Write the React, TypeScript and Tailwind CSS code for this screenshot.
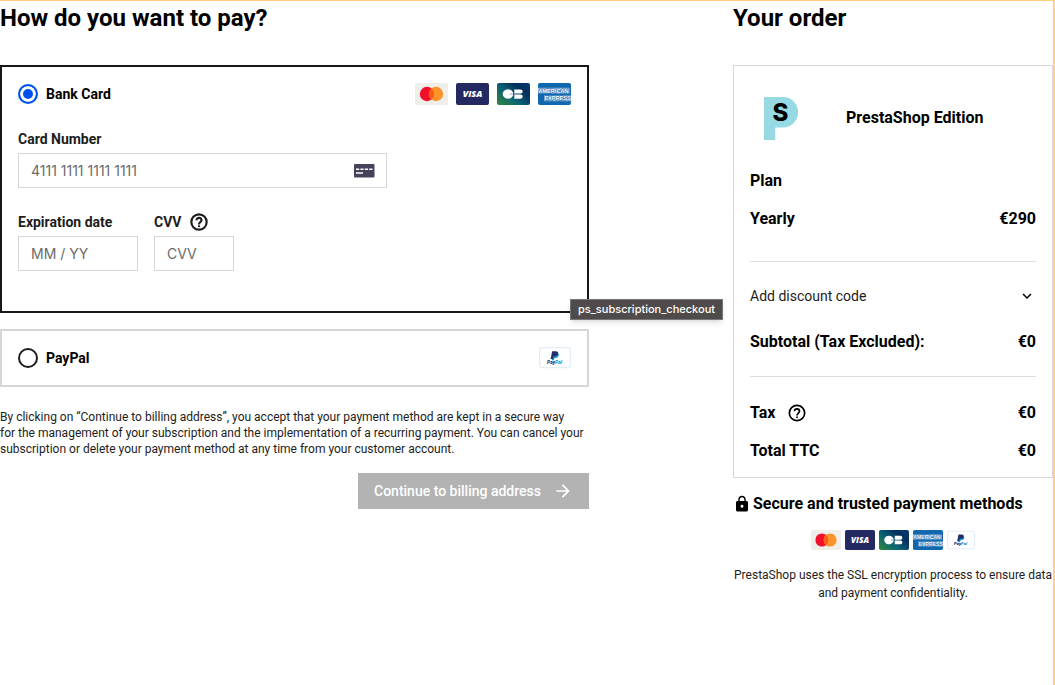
import { useState, type ReactNode } from "react";
import { MdArrowForward, MdKeyboardArrowDown, MdLock } from "react-icons/md";

type Brand = { className: string };

function Mastercard({ className }: Brand) {
  return (
    <svg viewBox="0 0 33 22" className={className} role="img" aria-label="Mastercard">
      <rect width="33" height="22" rx="2" fill="#efeee9" />
      <circle cx="12" cy="11" r="7.2" fill="#f20f2b" />
      <circle cx="21" cy="11" r="7.2" fill="#fb952b" />
      <path d="M16.5 5.4a7.2 7.2 0 0 1 0 11.2a7.2 7.2 0 0 1 0-11.2Z" fill="#f95c14" />
    </svg>
  );
}

function Visa({ className }: Brand) {
  return (
    <svg viewBox="0 0 33 22" className={className} role="img" aria-label="Visa">
      <rect width="33" height="22" rx="2" fill="#242a61" />
      <text x="16.5" y="14.4" textAnchor="middle" fontFamily="Open Sans, sans-serif" fontSize="9" fontWeight="800" fontStyle="italic" fill="#fff">
        VISA
      </text>
    </svg>
  );
}

function CarteBancaire({ className }: Brand) {
  return (
    <svg viewBox="0 0 33 22" className={className} role="img" aria-label="Carte Bancaire">
      <defs>
        <linearGradient id="cb" x1="0" y1="1" x2="1" y2="0.2">
          <stop offset="0" stopColor="#328a3c" />
          <stop offset="0.45" stopColor="#0b6275" />
          <stop offset="0.8" stopColor="#052f5c" />
          <stop offset="1" stopColor="#03386c" />
        </linearGradient>
      </defs>
      <rect width="33" height="22" rx="2" fill="url(#cb)" />
      <path d="M16.3 10.7A5.3 4.7 0 1 0 16.3 11.3H13V10.7Z" fill="#fff" />
      <path d="M17.3 6.4h6.3a2.1 2.1 0 0 1 0 4.2h-6.3ZM17.3 11.5h6.3a2.1 2.1 0 0 1 0 4.2h-6.3Z" fill="#fff" />
    </svg>
  );
}

function Amex({ className }: Brand) {
  return (
    <svg viewBox="0 0 33 22" className={className} role="img" aria-label="American Express">
      <rect width="33" height="22" rx="2" fill="#0f67ad" />
      <rect x="0" y="4.8" width="31.5" height="5.8" fill="#fff" opacity="0.6" />
      <rect x="6" y="12.4" width="27" height="5.8" fill="#fff" opacity="0.6" />
      <g fontFamily="Liberation Sans, sans-serif" fontWeight="700" fontSize="5.6" fill="#fff" stroke="#0f67ad" strokeWidth="0.9" paintOrder="stroke">
        <text x="0.4" y="9.7">AMERICAN</text>
        <text x="6.4" y="17.3">EXPRESS</text>
      </g>
    </svg>
  );
}

function PayPal({ className }: Brand) {
  return (
    <svg viewBox="0 0 30 20" className={className} role="img" aria-label="PayPal">
      <rect x="0.6" y="0.6" width="28.8" height="18.8" rx="2" fill="#fff" stroke="#e3edf5" strokeWidth="1.2" />
      <path d="M13.6 5.6h3.6c1.3.4 1.6 1.4 1.2 2.6-.4 1.5-1.5 2.1-3 2.1h-.9l-.5 2.2h-2.1Z" fill="#1b9ad9" />
      <path d="M12.3 4h3.4c1.9 0 2.6 1.1 2.2 2.5-.4 1.6-1.6 2.3-3.3 2.3h-1l-.5 2.5h-2.2Z" fill="#1f2f70" />
      <text x="14.6" y="15.6" textAnchor="middle" fontFamily="Roboto, sans-serif" fontSize="4.6" fontWeight="900" fontStyle="italic" fill="#1f2f70">
        Pay<tspan fill="#1b9ad9">Pal</tspan>
      </text>
    </svg>
  );
}

function PrestaShopLogo() {
  return (
    <svg viewBox="0 0 34 43" className="w-[34px] shrink-0" role="img" aria-label="PrestaShop">
      <path d="M0 0H19a15 15 0 0 1 0 30.5H11.3V43H0Z" fill="#97dae4" />
      <text x="16.5" y="24" textAnchor="middle" fontFamily="Inter, sans-serif" fontSize="24" fontWeight="800" fill="#000">
        S
      </text>
    </svg>
  );
}

function CardGlyph() {
  return (
    <svg viewBox="0 0 21 14" className="w-[21px]" aria-hidden="true">
      <rect width="20.5" height="13.5" rx="1" fill="#45435b" />
      <path d="M2 5.2h3.2M6.4 5.2h3.2M10.8 5.2h3.2M15.2 5.2h3.3M2 9h7" stroke="#fff" strokeWidth="1.5" />
    </svg>
  );
}

function HelpIcon({ weight }: { weight: number }) {
  return (
    <svg viewBox="0 0 24 24" className="size-5" fill="none" stroke="currentColor" strokeWidth={weight} aria-hidden="true">
      <circle cx="12" cy="12" r="9.2" />
      <path d="M9 10a3 3 0 1 1 6 0c0 2-3 2.2-3 5" />
      <path d="M12 16.1v2" />
    </svg>
  );
}

function Method(props: {
  name: string;
  selected: boolean;
  onSelect: () => void;
  brands: ReactNode;
  children?: ReactNode;
}) {
  return (
    <div className={props.selected ? "relative border-2 border-[#18181b] p-4" : "relative border-2 border-[#d6d6d6] p-4"}>
      <div className="flex h-[22px] items-center justify-between">
        <label className="flex items-center gap-2 text-sm font-bold text-black">
          <input
            type="radio"
            name="method"
            checked={props.selected}
            onChange={props.onSelect}
            className="size-5 appearance-none rounded-full border-2 border-[#1d1d1b] bg-white checked:border-[#0050f0] checked:bg-[#0050f0] checked:shadow-[inset_0_0_0_3px_white]"
          />
          {props.name}
        </label>
        <div className="flex items-center gap-2">{props.brands}</div>
      </div>
      {props.children}
    </div>
  );
}

const inputClass =
  "h-[35px] w-full border border-[#d6d6d6] bg-white px-3 font-['Inter',sans-serif] text-sm text-[#1d1d1b] outline-none placeholder:text-[#6b6b6b]";

function Row({ label, value }: { label: ReactNode; value?: string }) {
  return (
    <div className="flex items-center justify-between text-base leading-6 font-bold">
      <span className="flex items-center gap-3">{label}</span>
      <span>{value}</span>
    </div>
  );
}

export default function App() {
  const [method, setMethod] = useState("card");

  return (
    <main className="flex min-h-screen gap-36 border-t border-r-2 border-t-[#ffcc80] border-r-[#ffcf8c] bg-white font-['Roboto',sans-serif] text-black">
      <section className="min-w-0 flex-1">
        <h1 className="mb-[30px] text-2xl leading-[34px] font-bold">How do you want to pay?</h1>
        <form onSubmit={(e) => e.preventDefault()}>
          <div className="flex flex-col gap-4">
            <Method
              name="Bank Card"
              selected={method === "card"}
              onSelect={() => setMethod("card")}
              brands={
                <>
                  <Mastercard className="w-[33px]" />
                  <Visa className="w-[33px]" />
                  <CarteBancaire className="w-[33px]" />
                  <Amex className="w-[33px]" />
                </>
              }
            >
              <div className="flex flex-col gap-6 pt-6 pb-6 text-sm leading-5 font-bold text-[#1d1d1b]">
                <div className="w-2/3">
                  <label htmlFor="number" className="mb-1 block">Card Number</label>
                  <div className="relative">
                    <input id="number" inputMode="numeric" placeholder="4111 1111 1111 1111" className={`${inputClass} font-normal`} />
                    <span className="absolute inset-y-0 right-3 flex items-center">
                      <CardGlyph />
                    </span>
                  </div>
                </div>
                <div className="flex gap-4">
                  <div className="w-[120px]">
                    <label htmlFor="expiry" className="mb-1 block">Expiration date</label>
                    <input id="expiry" placeholder="MM / YY" className={`${inputClass} font-normal`} />
                  </div>
                  <div className="w-20">
                    <div className="mb-1 flex h-5 items-center gap-2">
                      <label htmlFor="cvv">CVV</label>
                      <button type="button" aria-label="About the CVV">
                        <HelpIcon weight={2.6} />
                      </button>
                    </div>
                    <input id="cvv" placeholder="CVV" className={`${inputClass} font-normal`} />
                  </div>
                </div>
              </div>
              <div role="tooltip" className="absolute -right-[136px] -bottom-[9px] z-10 border border-[#777] bg-[#504b4b] px-[7px] font-['Inter',sans-serif] text-[11px] leading-[19px] font-medium text-white shadow-md">
                ps_subscription_checkout
              </div>
            </Method>
            <Method
              name="PayPal"
              selected={method === "paypal"}
              onSelect={() => setMethod("paypal")}
              brands={<PayPal className="w-8" />}
            />
          </div>
          <p className="mt-[22px] text-xs leading-4 text-[#1d1d1b]">
            By clicking on “Continue to billing address”, you accept that your payment method are kept in a secure way
            <br />
            for the management of your subscription and the implementation of a recurring payment. You can cancel your
            subscription or delete your payment method at any time from your customer account.
          </p>
          <div className="mt-4 flex justify-end">
            <button type="submit" disabled className="flex h-9 min-w-[231px] items-center justify-between gap-2 bg-[#b3b3b3] px-4 text-sm font-medium text-white">
              Continue to billing address
              <MdArrowForward size={20} />
            </button>
          </div>
        </form>
      </section>

      <aside className="w-80 shrink-0">
        <h2 className="mb-[30px] text-2xl leading-[34px] font-bold">Your order</h2>
        <div className="border border-[#d6d6d6] px-4 pt-4 pb-3.5">
          <div className="flex h-[72px] items-center gap-12 pl-3.5 text-base font-bold">
            <PrestaShopLogo />
            PrestaShop Edition
          </div>
          <div className="flex flex-col gap-3.5 pt-[15px] pb-[30px]">
            <Row label="Plan" />
            <Row label="Yearly" value="€290" />
          </div>
          <div className="flex flex-col gap-6 border-t border-[#dedede] pt-6 pb-[22px]">
            <button type="button" className="flex items-center justify-between text-sm leading-5 text-[#1d1d1b]">
              Add discount code
              <MdKeyboardArrowDown size={18} className="text-black" />
            </button>
            <Row label="Subtotal (Tax Excluded):" value="€0" />
          </div>
          <div className="flex flex-col gap-3.5 border-t border-[#dedede] pt-6">
            <Row
              label={
                <>
                  Tax
                  <button type="button" aria-label="About the tax">
                    <HelpIcon weight={2} />
                  </button>
                </>
              }
              value="€0"
            />
            <Row label="Total TTC" value="€0" />
          </div>
        </div>
        <div className="flex flex-col items-center pt-3.5 text-center">
          <h3 className="flex items-center gap-0.5 self-start text-base leading-6 font-bold">
            <MdLock size={18} className="shrink-0" />
            Secure and trusted payment methods
          </h3>
          <div className="flex gap-1 pt-3.5">
            <Mastercard className="w-[30px]" />
            <Visa className="w-[30px]" />
            <CarteBancaire className="w-[30px]" />
            <Amex className="w-[30px]" />
            <PayPal className="w-7" />
          </div>
          <p className="pt-4 text-xs leading-[18px] text-[#1d1d1b]">
            PrestaShop uses the SSL encryption process to ensure data and payment confidentiality.
          </p>
        </div>
      </aside>
    </main>
  );
}
